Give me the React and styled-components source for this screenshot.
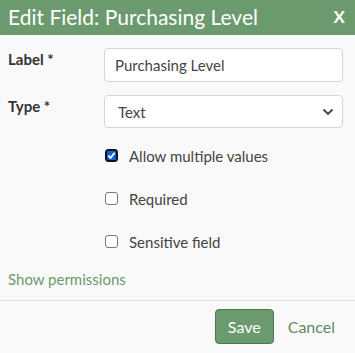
import React from "react";
import styled, { createGlobalStyle } from "styled-components";

const Global = createGlobalStyle`
  html, body { margin: 0; padding: 0; background: #f9f9f9; }
  body { font-family: "Lato", "Open Sans", sans-serif; }
`;

const Dialog = styled.div`
  width: 355px;
  height: 353px;
  background: #f9f9f9;
  display: flex;
  flex-direction: column;
  overflow: hidden;
`;

const Header = styled.div`
  height: 35px;
  background: #6a9a6e;
  color: #fff;
  display: flex;
  align-items: center;
  justify-content: space-between;
  padding: 0 8px 2px 8px;
  box-sizing: border-box;
`;

const Title = styled.h1`
  margin: 0;
  font-size: 21px;
  font-weight: 400;
`;

const Close = styled.span`
  font-size: 17px;
  font-weight: 700;
  margin-right: 2px;
`;

const Body = styled.div`
  padding: 13px 12px 0 8px;
  display: flex;
  flex-direction: column;
`;

const Row = styled.div`
  display: grid;
  grid-template-columns: 96px 1fr;
  align-items: start;
  margin-bottom: ${(p) => p.gap || 13}px;
`;

const Label = styled.label`
  font-size: 15px;
  font-weight: 700;
  color: #333;
  padding-top: 2px;
`;

const Input = styled.input`
  height: 34px;
  box-sizing: border-box;
  border: 1px solid #d6d6d6;
  border-radius: 4px;
  background: #fff;
  padding: 0 10px;
  font-family: inherit;
  font-size: 15px;
  color: #444;
  outline: none;
`;

const SelectBox = styled.div`
  height: 33px;
  box-sizing: border-box;
  border: 1px solid #d6d6d6;
  border-radius: 4px;
  background: #fff;
  padding: 0 8px 0 13px;
  display: flex;
  align-items: center;
  justify-content: space-between;
  font-size: 15px;
  color: #444;
`;

const Checks = styled.div`
  padding-left: 96px;
  display: flex;
  flex-direction: column;
  gap: 22px;
  margin-top: 4px;
`;

const CheckRow = styled.label`
  display: flex;
  align-items: center;
  gap: 11px;
  font-size: 15px;
  color: #444;
  height: 21px;
`;

const Box = styled.span`
  width: 13px;
  height: 13px;
  box-sizing: border-box;
  border-radius: 3px;
  border: 1px solid ${(p) => (p.checked ? "#111" : "#777")};
  background: ${(p) => (p.checked ? "#0d5fd6" : "#fff")};
  box-shadow: ${(p) => (p.checked ? "inset 0 0 0 1px #111" : "none")};
  display: flex;
  align-items: center;
  justify-content: center;
  margin-left: 1px;
  flex-shrink: 0;
`;

const Link = styled.a`
  font-size: 15px;
  color: #6a9a6e;
  margin-top: 18px;
  display: block;
  text-decoration: none;
`;

const Divider = styled.div`
  height: 1px;
  background: #dcdcdc;
  margin-top: 12px;
`;

const Footer = styled.div`
  display: flex;
  justify-content: flex-end;
  align-items: center;
  gap: 14px;
  padding: 8px 20px 0 0;
`;

const SaveButton = styled.button`
  height: 35px;
  padding: 0 12px;
  background: #6a9a6e;
  color: #fff;
  border: 1px solid #4c7a50;
  border-radius: 4px;
  font-family: inherit;
  font-size: 16px;
`;

const CancelLink = styled.span`
  font-size: 16px;
  color: #5e8a62;
`;

function Check({ checked, children }) {
  return (
    <CheckRow>
      <Box checked={checked}>
        {checked && (
          <svg width="9" height="9" viewBox="0 0 10 10">
            <path d="M1.5 5.2 L4 7.6 L8.5 2" fill="none" stroke="#fff" strokeWidth="2" />
          </svg>
        )}
      </Box>
      {children}
    </CheckRow>
  );
}

export default function App() {
  return (
    <>
      <Global />
      <Dialog>
        <Header>
          <Title>Edit Field: Purchasing Level</Title>
          <Close>X</Close>
        </Header>
        <Body>
          <Row>
            <Label>Label *</Label>
            <Input defaultValue="Purchasing Level" />
          </Row>
          <Row gap={0}>
            <Label>Type *</Label>
            <SelectBox>
              <span>Text</span>
              <svg width="12" height="8" viewBox="0 0 12 8">
                <path d="M1.5 1.5 L6 6 L10.5 1.5" fill="none" stroke="#444" strokeWidth="1.8" />
              </svg>
            </SelectBox>
          </Row>
          <Checks>
            <Check checked>Allow multiple values</Check>
            <Check>Required</Check>
            <Check>Sensitive field</Check>
          </Checks>
          <Link>Show permissions</Link>
        </Body>
        <Divider />
        <Footer>
          <SaveButton>Save</SaveButton>
          <CancelLink>Cancel</CancelLink>
        </Footer>
      </Dialog>
    </>
  );
}
